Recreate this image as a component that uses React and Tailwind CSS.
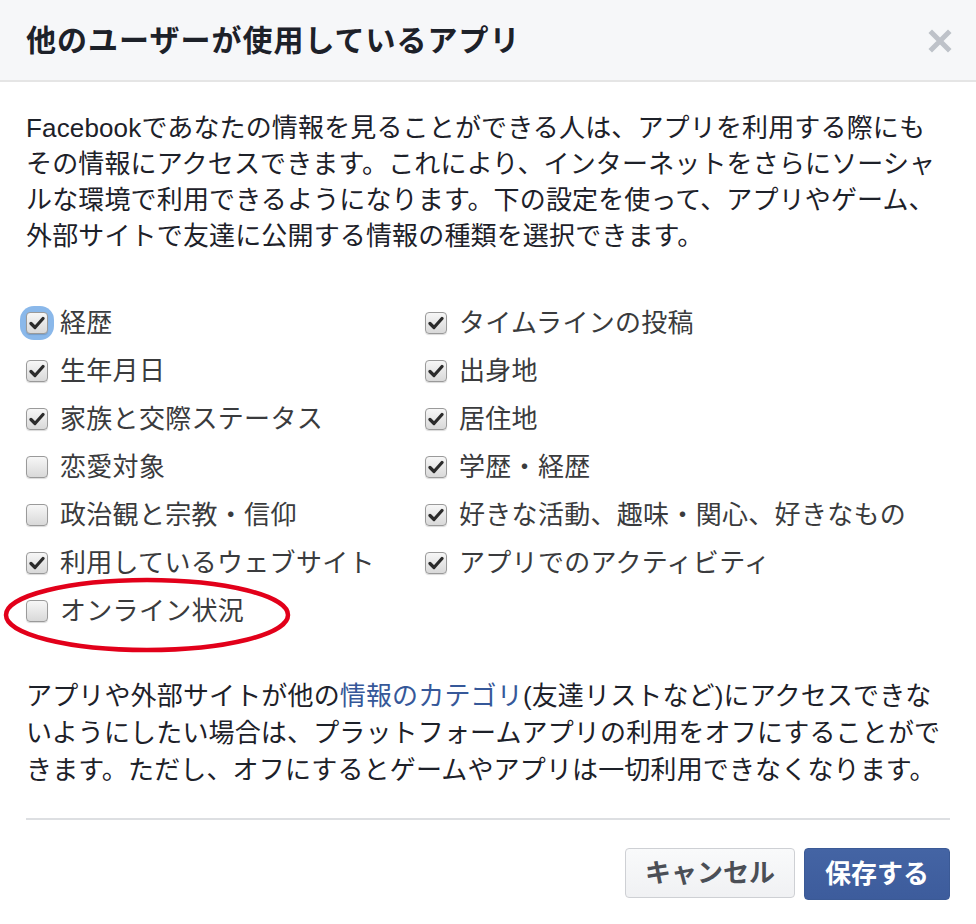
import React from "react";

const FONT = { fontFamily: '"Liberation Sans", "Noto Sans CJK JP", sans-serif' };

function Box({ checked, focus }) {
  return (
    <span className={"relative flex items-center justify-center rounded-[8px] " + (focus ? "ring-[6px] ring-[#8ab8ea]" : "")}>
      <span className="flex h-[22px] w-[22px] items-center justify-center rounded-[4px] border border-[#9a9a9a] bg-gradient-to-b from-[#f7f7f7] to-[#d9d9d9] shadow-[0_1px_1px_rgba(0,0,0,0.15)]">
        {checked && (
          <svg width="16" height="14" viewBox="0 0 16 14">
            <path d="M2 7.5 L6 11.5 L14 2.5" fill="none" stroke="#2b2b2b" strokeWidth="3.2" strokeLinecap="round" strokeLinejoin="round" />
          </svg>
        )}
      </span>
    </span>
  );
}

function Item({ label, checked, focus }) {
  return (
    <div className="flex h-12 items-center gap-[12px] text-[26px] tracking-[0.3px] text-[#3a3b3d]">
      <Box checked={checked} focus={focus} />
      <span className="leading-none">{label}</span>
    </div>
  );
}

export default function App() {
  const items = [
    ["経歴", true, true],
    ["タイムラインの投稿", true],
    ["生年月日", true],
    ["出身地", true],
    ["家族と交際ステータス", true],
    ["居住地", true],
    ["恋愛対象", false],
    ["学歴・経歴", true],
    ["政治観と宗教・信仰", false],
    ["好きな活動、趣味・関心、好きなもの", true],
    ["利用しているウェブサイト", true],
    ["アプリでのアクティビティ", true],
    ["オンライン状況", false],
  ];
  return (
    <div className="relative w-[976px] h-[924px] bg-white overflow-hidden" style={FONT}>
      <div className="flex h-[82px] items-center justify-between border-b-2 border-[#e5e5e5] bg-[#f6f7f9] pl-[26px] pr-[24px]">
        <h1 className="text-[30px] font-bold tracking-[1px] text-[#1d2129]">他のユーザーが使用しているアプリ</h1>
        <svg width="24" height="24" viewBox="0 0 24 24" className="mt-[2px]">
          <path d="M4 4 L20 20 M20 4 L4 20" stroke="#bec2c9" strokeWidth="5" strokeLinecap="square" />
        </svg>
      </div>

      <div className="px-[26px] pt-[28px]">
        <div className="text-[26px] leading-[36px] tracking-[0.15px] text-[#1d2129] whitespace-nowrap">
          <div>Facebookであなたの情報を見ることができる人は、アプリを利用する際にも</div>
          <div>その情報にアクセスできます。これにより、インターネットをさらにソーシャ</div>
          <div>ルな環境で利用できるようになります。下の設定を使って、アプリやゲーム、</div>
          <div>外部サイトで友達に公開する情報の種類を選択できます。</div>
        </div>

        <div className="mt-[45px] grid grid-cols-[399px_1fr]">
          {items.map(([l, c, f]) => (
            <Item key={l} label={l} checked={c} focus={f} />
          ))}
        </div>

        <div className="mt-[43px] text-[26px] leading-[37px] tracking-[0.15px] text-[#1d2129] whitespace-nowrap">
          <div>
            アプリや外部サイトが他の<span className="text-[#365899]">情報のカテゴリ</span>(友達リストなど)にアクセスできな
          </div>
          <div>いようにしたい場合は、プラットフォームアプリの利用をオフにすることがで</div>
          <div>きます。ただし、オフにするとゲームやアプリは一切利用できなくなります。</div>
        </div>

        <div className="mt-[29px] h-[2px] bg-[#dddfe2]" />

        <div className="mt-[28px] flex justify-end gap-[9px] pr-0">
          <button className="h-[50px] rounded-[4px] border border-[#ced0d4] bg-gradient-to-b from-[#f9fafb] to-[#f0f1f3] px-[19px] text-[26px] font-bold text-[#4b4f56]" style={FONT}>
            キャンセル
          </button>
          <button className="h-[52px] rounded-[4px] border border-[#3b5a96] bg-gradient-to-b from-[#4464a4] to-[#3d5c9c] px-[20px] text-[26px] font-bold text-white" style={FONT}>
            保存する
          </button>
        </div>
      </div>

      <svg className="absolute left-0 top-[574px]" width="300" height="84" viewBox="0 0 300 84">
        <ellipse cx="147" cy="41" rx="141" ry="35" fill="none" stroke="#e2001a" strokeWidth="4.5" />
      </svg>
    </div>
  );
}
